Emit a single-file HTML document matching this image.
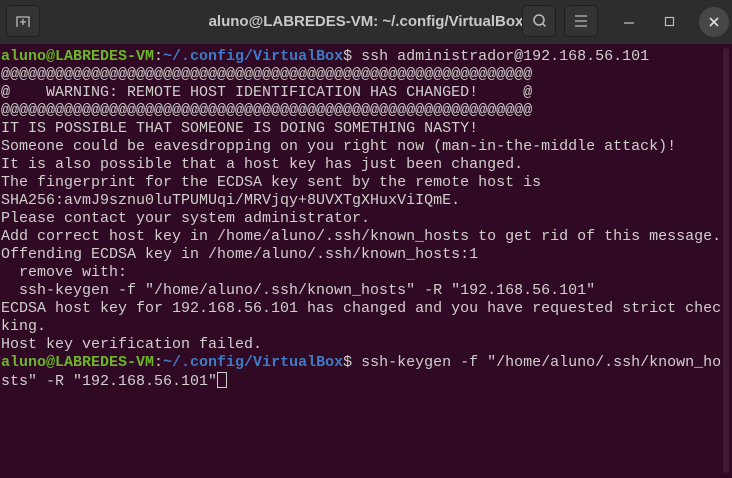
<!DOCTYPE html>
<html><head><meta charset="utf-8"><style>
html,body{margin:0;padding:0;width:732px;height:478px;overflow:hidden;background:#300a24}
.tb{position:absolute;left:0;top:0;width:732px;height:44px;background:#2d2d2d;}
.btn{position:absolute;top:5px;width:34px;height:32px;border:1px solid #1f1f1f;border-radius:5px;background:#333;box-sizing:border-box}
.title{position:absolute;top:0;left:0;width:732px;text-align:center;font:bold 15px/44px "Liberation Sans",sans-serif;color:#c8c8c8}
.term{position:absolute;left:1px;top:48px;font:15px/18px "Liberation Mono",monospace;color:#d0cfcc;white-space:pre;}
.g{color:#6cb52b;font-weight:bold}.b{color:#3e7ac6;font-weight:bold}
.cur{display:inline-block;width:8px;height:14px;border:1px solid #d0cfcc;vertical-align:-3px;line-height:0}
.sb{position:absolute;right:3px;top:48px;width:6px;height:425px;background:#3f1a34;border-radius:3px}
</style></head><body>
<div class="tb">
<div class="title">aluno@LABREDES-VM: ~/.config/VirtualBox</div>
<div class="btn" style="left:6px"><svg width="32" height="30" viewBox="0 0 32 30"><path d="M10 21V11h12v10M16 13v6M13 16h6" fill="none" stroke="#bbb" stroke-width="1.3"/></svg></div>
<div class="btn" style="left:522px"><svg width="32" height="30" viewBox="0 0 32 30"><circle cx="16" cy="14" r="5" fill="none" stroke="#bbb" stroke-width="1.5"/><path d="M19.5 17.5l3 3" stroke="#bbb" stroke-width="1.5"/></svg></div>
<div class="btn" style="left:564px"><svg width="32" height="30" viewBox="0 0 32 30"><path d="M10 10h12M10 15h12M10 20h12" stroke="#bbb" stroke-width="1.3"/></svg></div>
<svg style="position:absolute;left:620px;top:14px" width="20" height="16"><path d="M4 9h10" stroke="#bbb" stroke-width="1.3"/></svg>
<svg style="position:absolute;left:662px;top:14px" width="16" height="16"><rect x="3.5" y="3.5" width="8" height="8" fill="none" stroke="#bbb" stroke-width="1.2"/></svg>
<div style="position:absolute;left:699px;top:7px;width:30px;height:30px;border-radius:50%;background:#474747"></div>
<svg style="position:absolute;left:699px;top:7px" width="30" height="30"><path d="M11 11l8 8M19 11l-8 8" stroke="#ddd" stroke-width="1.6"/></svg>
</div>
<div class="sb"></div>
<div class="term"><span class="g">aluno@LABREDES-VM</span>:<span class="b">~/.config/VirtualBox</span>$ ssh administrador@192.168.56.101
@@@@@@@@@@@@@@@@@@@@@@@@@@@@@@@@@@@@@@@@@@@@@@@@@@@@@@@@@@@
@    WARNING: REMOTE HOST IDENTIFICATION HAS CHANGED!     @
@@@@@@@@@@@@@@@@@@@@@@@@@@@@@@@@@@@@@@@@@@@@@@@@@@@@@@@@@@@
IT IS POSSIBLE THAT SOMEONE IS DOING SOMETHING NASTY!
Someone could be eavesdropping on you right now (man-in-the-middle attack)!
It is also possible that a host key has just been changed.
The fingerprint for the ECDSA key sent by the remote host is
SHA256:avmJ9sznu0luTPUMUqi/MRVjqy+8UVXTgXHuxViIQmE.
Please contact your system administrator.
Add correct host key in /home/aluno/.ssh/known_hosts to get rid of this message.
Offending ECDSA key in /home/aluno/.ssh/known_hosts:1
  remove with:
  ssh-keygen -f "/home/aluno/.ssh/known_hosts" -R "192.168.56.101"
ECDSA host key for 192.168.56.101 has changed and you have requested strict chec
king.
Host key verification failed.
<span class="g">aluno@LABREDES-VM</span>:<span class="b">~/.config/VirtualBox</span>$ ssh-keygen -f "/home/aluno/.ssh/known_ho
sts" -R "192.168.56.101"<span class="cur"></span></div>
</body></html>
